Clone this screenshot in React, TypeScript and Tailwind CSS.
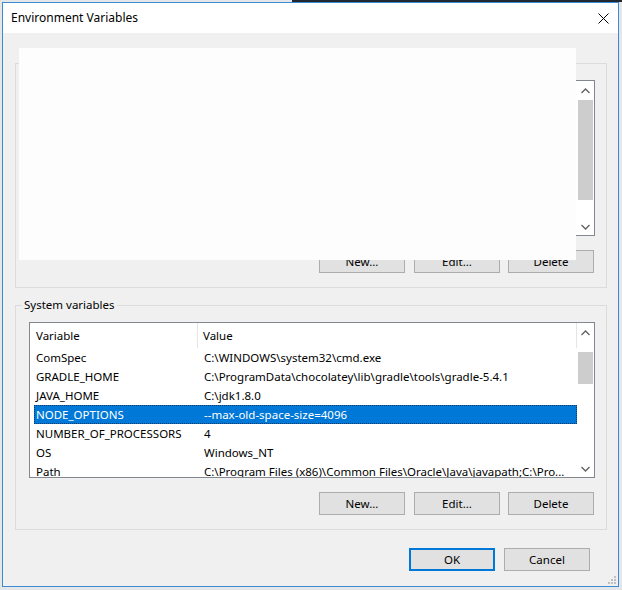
import React from "react";

const rows: [string, string][] = [
  ["ComSpec", "C:\\WINDOWS\\system32\\cmd.exe"],
  ["GRADLE_HOME", "C:\\ProgramData\\chocolatey\\lib\\gradle\\tools\\gradle-5.4.1"],
  ["JAVA_HOME", "C:\\jdk1.8.0"],
  ["NODE_OPTIONS", "--max-old-space-size=4096"],
  ["NUMBER_OF_PROCESSORS", "4"],
  ["OS", "Windows_NT"],
  ["Path", "C:\\Program Files (x86)\\Common Files\\Oracle\\Java\\javapath;C:\\Pro..."],
];

function Chevron({ up }: { up?: boolean }) {
  return (
    <svg width="9" height="6" viewBox="0 0 9 6" className="block">
      <path
        d={up ? "M0.5 5 L4.5 1 L8.5 5" : "M0.5 1 L4.5 5 L8.5 1"}
        fill="none"
        stroke="#606060"
        strokeWidth="1.3"
      />
    </svg>
  );
}

function ScrollBar({ thumbTop, thumbHeight }: { thumbTop: number; thumbHeight: number }) {
  return (
    <div className="flex w-[17px] flex-col bg-white">
      <div className="flex h-[17px] items-center justify-center pt-[3px]">
        <Chevron up />
      </div>
      <div className="flex-1">
        <div
          className="mx-[1px] bg-[#cdcdcd]"
          style={{ marginTop: thumbTop, height: thumbHeight }}
        />
      </div>
      <div className="flex h-[17px] items-center justify-center">
        <Chevron />
      </div>
    </div>
  );
}

function Button({ label, primary }: { label: string; primary?: boolean }) {
  return (
    <div
      className={
        primary
          ? "flex h-[23px] w-[86px] items-center justify-center border-2 border-[#0078d7] bg-[#e1e1e1] text-black"
          : "flex h-[23px] w-[86px] items-center justify-center border border-[#adadad] bg-[#e1e1e1] text-black"
      }
    >
      {label}
    </div>
  );
}

function ListView({
  data,
  thumbTop,
  thumbHeight,
  showHeader,
}: {
  data: [string, string][];
  thumbTop: number;
  thumbHeight: number;
  showHeader: boolean;
}) {
  return (
    <div className="flex h-[156px] w-[566px] border border-[#828790] bg-white">
      <div className="flex min-w-0 flex-1 flex-col overflow-hidden">
        {showHeader && (
          <div className="flex h-[25px] shrink-0 items-center">
            <div className="flex h-full w-[168px] items-center border-r border-[#e5e5e5] pl-[6px]">
              Variable
            </div>
            <div className="flex h-full flex-1 items-center border-r border-[#e5e5e5] pl-[5px]">
              Value
            </div>
          </div>
        )}
        {data.map(([k, v]) => {
          const sel = k === "NODE_OPTIONS";
          return (
            <div
              key={k}
              className={
                sel
                  ? "ml-[4px] flex h-[19px] shrink-0 items-center whitespace-nowrap border border-dotted border-[#0a3a66] bg-[#0078d7] text-white"
                  : "ml-[4px] flex h-[19px] shrink-0 items-center whitespace-nowrap border border-transparent"
              }
            >
              <div className="w-[169px] shrink-0 pl-[1px]">{k}</div>
              <div className="whitespace-nowrap">{v}</div>
            </div>
          );
        })}
      </div>
      <ScrollBar thumbTop={thumbTop} thumbHeight={thumbHeight} />
    </div>
  );
}

function GroupBox({
  label,
  data,
  thumbTop,
  thumbHeight,
  showHeader,
}: {
  label?: string;
  data: [string, string][];
  thumbTop: number;
  thumbHeight: number;
  showHeader: boolean;
}) {
  return (
    <div className="relative h-[225px] w-[592px] border border-[#dcdcdc] pl-[13px] pr-[11px] pt-[16px]">
      {label && (
        <div className="absolute -top-[9px] left-[6px] bg-[#f0f0f0] px-[2px] leading-[16px]">
          {label}
        </div>
      )}
      <ListView data={data} thumbTop={thumbTop} thumbHeight={thumbHeight} showHeader={showHeader} />
      <div className="mt-[14px] flex justify-end pr-[1px]">
        <Button label="New..." />
        <div className="w-[9px]" />
        <Button label="Edit..." />
        <div className="w-[8px]" />
        <Button label="Delete" />
      </div>
    </div>
  );
}

export default function App() {
  return (
    <div className="relative h-[590px] w-[622px] overflow-hidden bg-[#e4e6e8] pl-[2px] pt-[2px] font-['Noto_Sans','DejaVu_Sans',sans-serif] text-[11.5px] text-black">
      <div className="absolute left-[292px] top-0 h-[2px] w-[330px] bg-[#20272e]" />
      <div className="relative flex h-[585px] w-[617px] flex-col border border-[#3a8ad4] bg-[#f0f0f0]">
        <div className="flex h-[30px] shrink-0 items-center justify-between bg-white pl-[8px] pr-[9px] text-[12px]">
          <span>Environment Variables</span>
          <svg width="11" height="11" viewBox="0 0 11 11">
            <path d="M0.5 0.5 L10.5 10.5 M10.5 0.5 L0.5 10.5" stroke="#000" strokeWidth="1" />
          </svg>
        </div>
        <div className="flex flex-1 flex-col pl-[12px] pt-[30px]">
          <GroupBox data={[]} thumbTop={2} thumbHeight={100} showHeader={false} />
          <div className="h-[17px]" />
          <GroupBox label="System variables" data={rows} thumbTop={12} thumbHeight={32} showHeader />
          <div className="mt-[18px] flex justify-end pr-[28px]">
            <Button label="OK" primary />
            <div className="w-[9px]" />
            <Button label="Cancel" />
          </div>
        </div>
        <div className="absolute left-[16px] top-[45px] h-[212px] w-[557px] bg-[#fdfdfd]" />
        <svg className="absolute bottom-[2px] right-[2px]" width="8" height="8" viewBox="0 0 8 8">
          <rect x="6" y="0" width="2" height="2" fill="#c0c0c0" />
          <rect x="3" y="3" width="2" height="2" fill="#c0c0c0" />
          <rect x="6" y="3" width="2" height="2" fill="#c0c0c0" />
          <rect x="0" y="6" width="2" height="2" fill="#c0c0c0" />
          <rect x="3" y="6" width="2" height="2" fill="#c0c0c0" />
          <rect x="6" y="6" width="2" height="2" fill="#c0c0c0" />
        </svg>
      </div>
    </div>
  );
}
